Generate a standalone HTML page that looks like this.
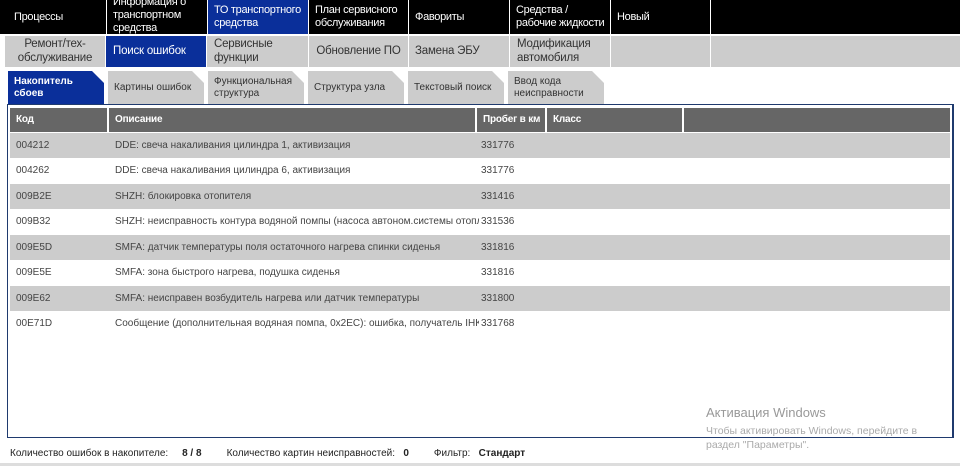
<!DOCTYPE html><html><head><meta charset="utf-8"><style>
*{margin:0;padding:0;box-sizing:border-box}
body{width:960px;height:466px;background:#fff;font-family:"Liberation Sans",Arial,sans-serif;position:relative;overflow:hidden}
.a{position:absolute;display:flex;align-items:center;line-height:1.15}
.t{background:#000;color:#fff;font-size:11px;letter-spacing:-0.3px;padding-left:6px;top:0;height:34px}
.s{background:#ccc;color:#333;font-size:11.5px;letter-spacing:-0.2px;top:36px;height:31px;justify-content:center;text-align:center}
.tab{background:#ccc;color:#333;font-size:10px;top:71px;height:33px;padding-left:6px;clip-path:polygon(0 0,calc(100% - 12px) 0,100% 12px,100% 100%,0 100%)}
.h{background:#666;color:#fff;font-weight:bold;font-size:10px;letter-spacing:-0.2px;top:108px;height:24px;padding-left:6px}
.r{position:absolute;left:10px;width:940px;height:25px;font-size:10px;color:#444}
.r span{position:absolute;top:7px;white-space:nowrap}
</style></head><body>
<div class="a t" style="left:0;width:106px;padding-left:14px">Процессы</div>
<div class="a t" style="left:107px;width:100px;align-items:flex-start;line-height:13px;top:-4px;height:38px;overflow:hidden">Информация о транспортном средства</div>
<div class="a t" style="left:208px;width:100px;background:#0a2f9a">ТО транспортного средства</div>
<div class="a t" style="left:309px;width:99px">План сервисного обслуживания</div>
<div class="a t" style="left:409px;width:100px">Фавориты</div>
<div class="a t" style="left:510px;width:100px">Средства / рабочие жидкости</div>
<div class="a t" style="left:611px;width:99px">Новый</div>
<div class="a t" style="left:711px;width:249px"></div>
<div class="a s" style="left:5px;width:100px">Ремонт/тех-обслуживание</div>
<div class="a s" style="left:106px;width:100px;background:#0a2f9a;color:#fff;justify-content:flex-start;padding-left:7px">Поиск ошибок</div>
<div class="a s" style="left:207px;width:101px;justify-content:flex-start;padding-left:7px;text-align:left">Сервисные функции</div>
<div class="a s" style="left:309px;width:99px">Обновление ПО</div>
<div class="a s" style="left:409px;width:100px;justify-content:flex-start;padding-left:6px">Замена ЭБУ</div>
<div class="a s" style="left:510px;width:100px;justify-content:flex-start;padding-left:7px;text-align:left">Модификация автомобиля</div>
<div class="a s" style="left:611px;width:99px"></div>
<div class="a s" style="left:711px;width:249px"></div>
<div class="a tab" style="left:8px;width:96px;background:#0a2f9a;color:#fff;font-weight:bold">Накопитель сбоев</div>
<div class="a tab" style="left:108px;width:96px">Картины ошибок</div>
<div class="a tab" style="left:208px;width:96px">Функциональная структура</div>
<div class="a tab" style="left:308px;width:96px">Структура узла</div>
<div class="a tab" style="left:408px;width:96px">Текстовый поиск</div>
<div class="a tab" style="left:508px;width:96px">Ввод кода неисправности</div>
<div style="position:absolute;left:7px;top:104px;width:947px;height:334px;border:1.5px solid #1f3a6e;border-right:2px solid #1f3a6e"></div>
<div class="a h" style="left:10px;width:97px">Код</div>
<div class="a h" style="left:109px;width:366px">Описание</div>
<div class="a h" style="left:477px;width:68px">Пробег в км</div>
<div class="a h" style="left:547px;width:135px">Класс</div>
<div class="a h" style="left:684px;width:266px"></div>
<div class="r" style="top:133px;background:#ccc"><span style="left:6px">004212</span><span style="left:105px">DDE: свеча накаливания цилиндра 1, активизация</span><span style="left:471px">331776</span></div>
<div class="r" style="top:158px"><span style="left:6px">004262</span><span style="left:105px">DDE: свеча накаливания цилиндра 6, активизация</span><span style="left:471px">331776</span></div>
<div class="r" style="top:184px;background:#ccc"><span style="left:6px">009B2E</span><span style="left:105px">SHZH: блокировка отопителя</span><span style="left:471px">331416</span></div>
<div class="r" style="top:209px"><span style="left:6px">009B32</span><span style="left:105px;width:364px;overflow:hidden">SHZH: неисправность контура водяной помпы (насоса автоном.системы отопления)</span><span style="left:471px">331536</span></div>
<div class="r" style="top:235px;background:#ccc"><span style="left:6px">009E5D</span><span style="left:105px">SMFA: датчик температуры поля остаточного нагрева спинки сиденья</span><span style="left:471px">331816</span></div>
<div class="r" style="top:260px"><span style="left:6px">009E5E</span><span style="left:105px">SMFA: зона быстрого нагрева, подушка сиденья</span><span style="left:471px">331816</span></div>
<div class="r" style="top:286px;background:#ccc"><span style="left:6px">009E62</span><span style="left:105px">SMFA: неисправен возбудитель нагрева или датчик температуры</span><span style="left:471px">331800</span></div>
<div class="r" style="top:311px"><span style="left:6px">00E71D</span><span style="left:105px;width:364px;overflow:hidden">Сообщение (дополнительная водяная помпа, 0x2EC): ошибка, получатель IHKA</span><span style="left:471px">331768</span></div>
<div style="position:absolute;left:706px;top:405px;font-size:13px;color:#999">Активация Windows</div>
<div style="position:absolute;left:706px;top:424px;font-size:10.5px;color:#aaa;line-height:14px">Чтобы активировать Windows, перейдите в<br>раздел "Параметры".</div>
<div style="position:absolute;left:10px;top:448px;font-size:10px;color:#222;white-space:nowrap">Количество ошибок в накопителе:&nbsp;&nbsp;&nbsp;&nbsp; <b>8 / 8</b>&nbsp;&nbsp;&nbsp;&nbsp;&nbsp;&nbsp;&nbsp;&nbsp; Количество картин неисправностей:&nbsp;&nbsp; <b>0</b>&nbsp;&nbsp;&nbsp;&nbsp;&nbsp;&nbsp;&nbsp;&nbsp; Фильтр:&nbsp;&nbsp; <b>Стандарт</b></div>
<div style="position:absolute;left:0;top:463px;width:960px;height:3px;background:#ddd"></div>
</body></html>
